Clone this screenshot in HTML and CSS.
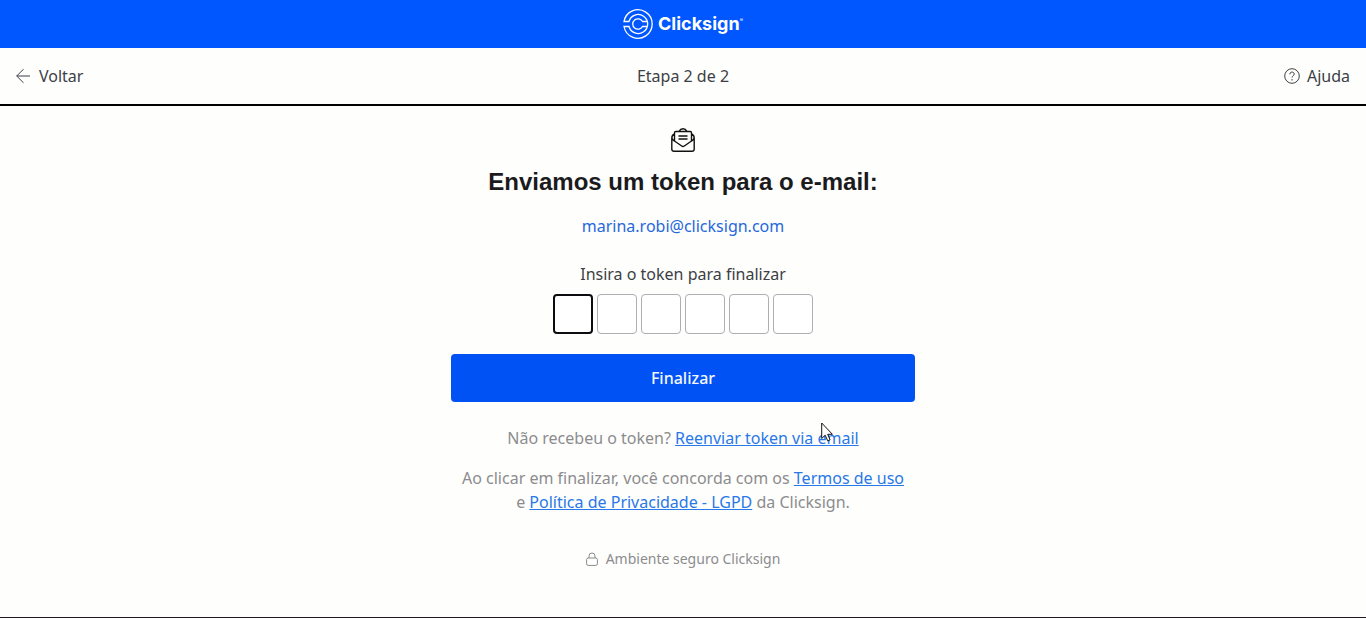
FILE: index.html
```html
<!DOCTYPE html>
<html lang="pt-BR">
  <head>
    <meta charset="UTF-8" />
    <meta name="viewport" content="width=device-width, initial-scale=1" />
    <title>Clicksign</title>
    <link rel="stylesheet" href="styles.css">
  </head>

  <body>
    <header class="topo">
      <svg class="logo" viewBox="0 0 30 30" aria-hidden="true">
        <path d="M1 12.500A14.200 14.200 0 1 1 1 17.500H6A9.500 9.500 0 1 0 6 12.500Z" />
        <path d="M24 12.500H19.500A5.200 5.200 0 1 0 19.500 17.500H24" />
      </svg>
      <span class="marca">Clicksign<sup>®</sup></span>
    </header>

    <nav class="navegacao">
      <a class="voltar" href="#">
        <svg class="seta" viewBox="0 0 16 16"><path d="M14 8H.7M7.500 1.200L.7 8l6.800 6.800" /></svg>
        Voltar
      </a>
      <span>Etapa 2 de 2</span>
      <a class="ajuda" href="#">
        <svg class="duvida" viewBox="0 0 16 16">
          <circle cx="8" cy="8" r="7.3" />
          <path d="M5.800 6.300c0-3 4.400-2.900 4.400-.2 0 1.800-2.200 1.700-2.200 3.500M8 11v1.500" />
        </svg>
        Ajuda
      </a>
    </nav>

    <main class="conteudo">
      <svg class="envelope" viewBox="0 0 24 24" aria-hidden="true">
        <path d="M3.500 6Q.8 7.200.8 10v11q0 2.200 2.200 2.200h18q2.200 0 2.200-2.200V10q0-2.800-2.700-4M.8 9.500q.3 2.300 2.700 3.500L10.700 18q1.300.9 2.600 0L20.500 13q2.400-1.200 2.700-3.500M3.500 13V4.800q0-1.300 1.300-1.300h14.400q1.300 0 1.300 1.300V13M8 3.300Q9.500.8 12 .8T16 3.300" />
        <path class="linhas" d="M7.500 8h9M7.500 11h9" />
      </svg>
      <h1>Enviamos um token para o e-mail:</h1>
      <p class="email">marina.robi@clicksign.com</p>

      <form class="formulario">
        <label for="token1">Insira o token para finalizar</label>
        <div class="token">
          <input class="ativo" id="token1" type="text" maxlength="1" />
          <input type="text" maxlength="1" aria-label="Dígito 2" />
          <input type="text" maxlength="1" aria-label="Dígito 3" />
          <input type="text" maxlength="1" aria-label="Dígito 4" />
          <input type="text" maxlength="1" aria-label="Dígito 5" />
          <input type="text" maxlength="1" aria-label="Dígito 6" />
        </div>
        <button type="submit">Finalizar</button>
      </form>

      <p class="reenviar">
        Não recebeu o token? <a href="#">Reenviar token via email</a>
        <svg class="cursor" viewBox="0 0 12 20" aria-hidden="true">
          <path d="M.700 1v15.500l3.500-3.300 2.500 5.600 2.400-1L6.700 12.300h4.700z" />
        </svg>
      </p>
      <p class="termos">
        Ao clicar em finalizar, você concorda com os <a href="#">Termos de uso</a><br />
        e <a href="#">Política de Privacidade - LGPD</a> da Clicksign.
      </p>
      <p class="seguro">
        <svg class="cadeado" viewBox="0 0 12 14" aria-hidden="true">
          <rect x=".6" y="6" width="10.800" height="7.400" rx="1.500" />
          <path d="M3 6V4q0-3 3-3t3 3v2" />
        </svg>
        Ambiente seguro Clicksign
      </p>
    </main>
  </body>
</html>
```

FILE: styles.css
```css
* {
  box-sizing: border-box;
}

body {
  margin: 0;
  min-height: 100vh;
  background-color: #fefefd;
  border-bottom: 1px solid #21191f;
  color: #3c3f45;
  font-family: "Noto Sans", sans-serif;
  font-size: 16px;
  line-height: 24px;
}

h1,
p {
  margin: 0;
}

svg {
  fill: none;
  stroke: currentColor;
}

.topo {
  display: flex;
  align-items: center;
  justify-content: center;
  gap: 5px;
  height: 48px;
  background-color: #0057ff;
  color: #fff;
}

.logo {
  width: 30px;
  height: 30px;
  stroke-width: 1.3;
}

.marca {
  font-family: Inter, sans-serif;
  font-size: 18px;
  font-weight: 700;
}

.marca sup {
  font-size: 5px;
  font-weight: 400;
  line-height: 0;
  vertical-align: 8px;
}

.navegacao {
  display: grid;
  grid-template-columns: 1fr auto 1fr;
  align-items: center;
  padding: 16px;
  border-bottom: 2px solid #000;
}

.navegacao a {
  display: flex;
  align-items: center;
  gap: 7px;
  color: inherit;
  text-decoration: none;
}

.navegacao .ajuda {
  justify-content: flex-end;
}

.seta,
.duvida {
  width: 16px;
  height: 16px;
}

.conteudo {
  display: flex;
  flex-direction: column;
  align-items: center;
  max-width: 496px;
  margin: 0 auto;
  padding: 22px 16px;
  text-align: center;
}

.envelope {
  width: 24px;
  height: 24px;
  color: #111;
  stroke-width: 1.4;
}

.linhas {
  stroke-width: 1.6;
}

h1 {
  margin-top: 14px;
  color: #1b1b1d;
  font-family: "Liberation Sans", sans-serif;
  font-size: 24px;
  line-height: 32px;
}

.email {
  margin-top: 16px;
  color: #2468db;
}

.formulario {
  width: 100%;
  margin-top: 24px;
}

.formulario label {
  display: block;
}

.token {
  display: flex;
  justify-content: center;
  gap: 4px;
  margin: 8px 0 20px;
}

.token input {
  width: 40px;
  height: 40px;
  padding: 0;
  border: 1px solid #aeaeb4;
  border-radius: 4px;
  background-color: #fff;
  font: inherit;
  text-align: center;
}

.token .ativo {
  border: 2px solid #0c0c10;
}

button {
  display: block;
  width: 100%;
  height: 48px;
  border: 0;
  border-radius: 4px;
  background-color: #0052f5;
  color: #f4f7ff;
  font: inherit;
  font-weight: 500;
}

.reenviar,
.termos {
  color: #8c8c8e;
}

.reenviar {
  position: relative;
  margin-top: 24px;
}

.reenviar a,
.termos a {
  color: #2878e8;
}

.cursor {
  position: absolute;
  top: -4px;
  right: 26px;
  width: 12px;
  height: 20px;
  color: #111;
  fill: #fff;
}

.termos {
  margin-top: 16px;
}

.seguro {
  display: flex;
  align-items: center;
  gap: 8px;
  margin-top: 33px;
  color: #8c8c8e;
  font-size: 14px;
}

.cadeado {
  width: 12px;
  height: 14px;
}
```
